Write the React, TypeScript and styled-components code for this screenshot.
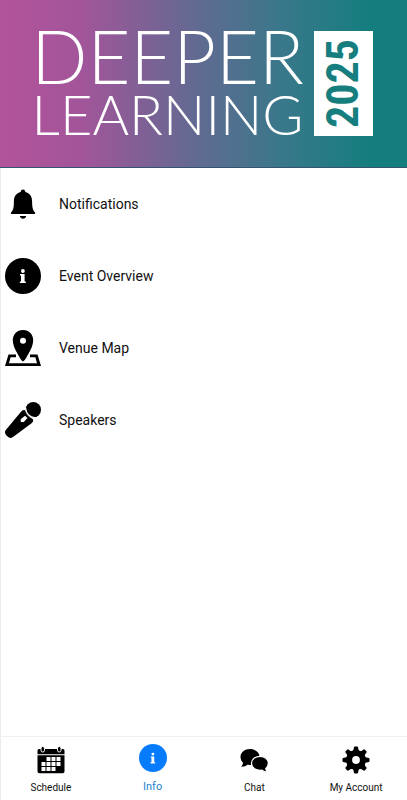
import React from 'react';
import styled, { createGlobalStyle } from 'styled-components';

const GlobalStyle = createGlobalStyle`
  * { box-sizing: border-box; }
  body { margin: 0; background: #fff; color: #111; font-family: Roboto, "Liberation Sans", sans-serif; }
`;

const Page = styled.div`
  display: flex;
  flex-direction: column;
  min-height: 100vh;
  border-left: 1px solid #ebebeb;
`;

const Banner = styled.header`
  display: flex;
  justify-content: center;
  align-items: flex-start;
  gap: 12px;
  margin-left: -1px;
  padding: 31px 34px 21px 33px;
  border-bottom: 1px solid #35556f;
  background: linear-gradient(90deg, #b3539b 0%, #a2559a 20%, #626a92 48%, #38788a 70%, #147e7e 91%, #147e7e 100%);
`;

const Title = styled.h1`
  margin: 0;
  width: 269px;
  color: #fff;
  font-family: Lato, sans-serif;
  font-weight: 300;
  white-space: nowrap;
`;

const TitleLine = styled.span<{ $size: number; $height: number }>`
  display: flex;
  justify-content: center;
  align-items: center;
  font-size: ${(p) => p.$size}px;
  line-height: ${(p) => p.$height}px;
  height: ${(p) => p.$height}px;
`;

const Year = styled.div`
  display: flex;
  align-items: center;
  justify-content: center;
  width: 59px;
  height: 105px;
  background: #fff;
  color: #177e80;
  font: bold 44px/59px "Roboto Condensed", "Liberation Sans Narrow", "Liberation Sans", sans-serif;
  writing-mode: vertical-rl;
  transform: rotate(180deg);
`;

const Menu = styled.nav`
  flex: 1;
  display: flex;
  flex-direction: column;
`;

const MenuItem = styled.a`
  display: flex;
  align-items: center;
  gap: 18px;
  height: 72px;
  padding-left: 4px;
  color: #111;
  font-size: 14px;
  text-decoration: none;
`;

const TabBar = styled.nav`
  display: grid;
  grid-template-columns: repeat(4, 1fr);
  height: 64px;
  margin-left: -1px;
  border-top: 1px solid #f0f0f0;
`;

const Tab = styled.button<{ $active?: boolean }>`
  display: flex;
  flex-direction: column;
  align-items: center;
  gap: ${(p) => (p.$active ? 8 : 7)}px;
  padding: ${(p) => (p.$active ? 7 : 9)}px 0 0;
  border: 0;
  background: none;
  color: ${(p) => (p.$active ? '#2383cf' : '#111')};
  font: ${(p) => (p.$active ? 11 : 10)}px/14px Roboto, sans-serif;
  cursor: pointer;
`;

const Icon = styled.svg<{ $size: number }>`
  display: block;
  flex: none;
  width: ${(p) => p.$size}px;
  height: ${(p) => p.$size}px;
`;

const BellIcon = () => (
  <Icon $size={36} viewBox="0 0 36 36" aria-hidden="true">
    <path d="M18 3.500c1.500 0 2.300 1 2.300 2.600 4.500 1.200 6.800 4.500 6.800 9.400 0 6 .8 9 3 10.900V28H6v-1.600c2.200-1.900 2.900-4.900 2.900-10.900 0-4.900 2.300-8.200 6.800-9.400 0-1.600.8-2.600 2.300-2.600z" />
    <path d="M14.900 30h6.200c-.3 1.800-1.500 2.700-3.100 2.700s-2.800-.9-3.100-2.700z" />
  </Icon>
);

const InfoIcon = ({ size, color }: { size: number; color: string }) => (
  <Icon $size={size} viewBox="0 0 36 36" aria-hidden="true">
    <circle cx="18" cy="18" r="18" fill={color} />
    <circle cx="17.900" cy="13" r="1.900" fill="#fff" />
    <path fill="#fff" d="M15 16h4.600v7.500h1.200V25h-6v-1.500H16v-6h-1z" />
  </Icon>
);

const MapIcon = () => (
  <Icon $size={36} viewBox="0 0 36 36" aria-hidden="true">
    <path fillRule="evenodd" d="M18 0C11.800 0 7.800 4.600 7.800 10.200c0 4.600 2.100 8.700 4.600 13.200 1.700 3 3.500 6.900 5.600 8.100 2.100-1.200 3.900-5.100 5.600-8.100 2.500-4.500 4.600-8.600 4.600-13.200C28.200 4.600 24.200 0 18 0zm0 7.800a3 3 0 1 0 0 6 3 3 0 0 0 0-6z" />
    <path d="M3.500 24.500H11v2.800H5.600L4 33.200h28l-1.600-5.900H25v-2.800h7.500L36 36H0z" />
  </Icon>
);

const MicIcon = () => (
  <Icon $size={36} viewBox="0 0 36 36" aria-hidden="true">
    <circle cx="28.300" cy="7.700" r="7.700" />
    <path d="M15.800 10Q18 7.300 20 8.300C21.400 13 24 15.600 27.700 16.900Q28.900 19 26.900 21L8 35Q5 37 2.600 34.600L1.200 33.200Q-1 30.500.8 28Z" />
    <path d="M20.400 5.500C21.400 12 24 14.800 30.500 16" fill="none" stroke="#fff" strokeWidth="1.300" />
    <path fill="#fff" d="M20 13.700l2.500 2.300-3.700 4h-3.100v-2.700z" />
  </Icon>
);

const CalendarIcon = () => (
  <Icon $size={28} viewBox="0 0 28 28" aria-hidden="true">
    <path d="M2 3h24q1.500 0 1.500 1.500v3.700H.5V4.500Q.5 3 2 3zM.5 9.300h27v16.200Q27.500 27.300 25.700 27.300H2.300Q.5 27.300.5 25.500z" />
    <g stroke="#fff" strokeWidth="1">
      <rect x="4" y=".5" width="3.500" height="5.500" rx="1.700" />
      <rect x="20.500" y=".5" width="3.500" height="5.500" rx="1.700" />
    </g>
    <path fill="#fff" d="M9.500 11h4v4h-4zm5 0h4v4h-4zm5 0h4v4h-4zm-15 5h4v4h-4zm5 0h4v4h-4zm5 0h4v4h-4zm5 0h4v4h-4zm-15 5h4v4h-4zm5 0h4v4h-4zm5 0h4v4h-4z" />
  </Icon>
);

const ChatIcon = () => (
  <Icon $size={28} viewBox="0 0 28 28" aria-hidden="true">
    <path d="M10 3C4.700 3 .5 6.400.5 10.800c0 2.600 1 4.500 2.500 6-.1 1.500-.7 2.800-1.800 3.900 2.800.1 4.900-.7 6.300-1.900 7 .8 12-2.700 12-8C19.500 6.400 15.300 3 10 3z" />
    <path stroke="#fff" strokeWidth="1.200" d="M20 10.300c4.700 0 8.300 2.900 8.300 6.900 0 2.200-1 4-2.500 5.200.1 1.400.6 2.500 1.600 3.700-2.500-.1-4.200-.8-5.400-1.900-6 .7-10.500-2.300-10.500-7 0-4 3.800-6.900 8.500-6.900z" />
  </Icon>
);

const GearIcon = () => (
  <Icon $size={28} viewBox="-14 -14 28 28" aria-hidden="true">
    {[0, 45, 90, 135, 180, 225, 270, 315].map((angle) => (
      <path key={angle} transform={`rotate(${angle})`} d="M-3.700-8.500C-2.300-10-2.400-11-2.100-12.800Q-1.900-13.500-1.200-13.500H1.200Q1.900-13.500 2.100-12.800C2.400-11 2.300-10 3.700-8.500z" />
    ))}
    <circle r="6.900" fill="none" stroke="#000" strokeWidth="6" />
  </Icon>
);

export default function App() {
  return (
    <>
      <GlobalStyle />
      <Page>
        <Banner>
          <Title>
            <TitleLine $size={74} $height={50}>DEEPER</TitleLine>
            <TitleLine $size={56} $height={65}>LEARNING</TitleLine>
          </Title>
          <Year>2025</Year>
        </Banner>
        <Menu aria-label="Event information">
          <MenuItem href="#notifications"><BellIcon />Notifications</MenuItem>
          <MenuItem href="#overview"><InfoIcon size={36} color="#000" />Event Overview</MenuItem>
          <MenuItem href="#map"><MapIcon />Venue Map</MenuItem>
          <MenuItem href="#speakers"><MicIcon />Speakers</MenuItem>
        </Menu>
        <TabBar aria-label="Main">
          <Tab><CalendarIcon />Schedule</Tab>
          <Tab $active aria-current="page"><InfoIcon size={28} color="#067bfb" />Info</Tab>
          <Tab><ChatIcon />Chat</Tab>
          <Tab><GearIcon />My Account</Tab>
        </TabBar>
      </Page>
    </>
  );
}
